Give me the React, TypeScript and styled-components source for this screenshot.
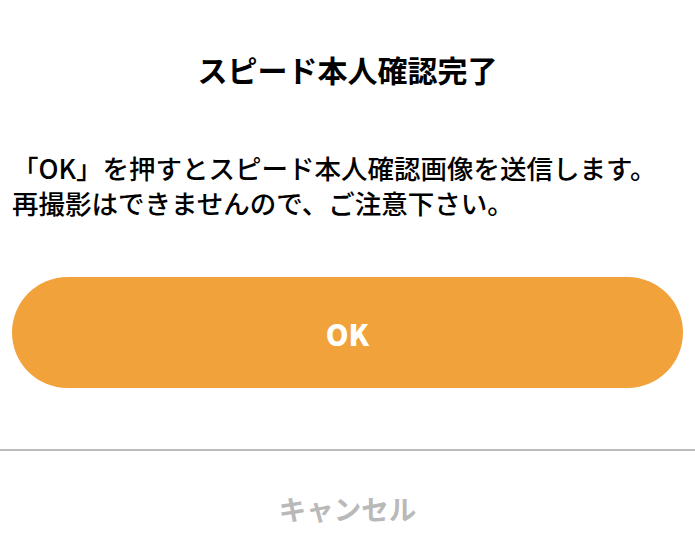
import React from "react";
import styled, { createGlobalStyle } from "styled-components";

const GlobalStyle = createGlobalStyle`
  html, body {
    margin: 0;
    padding: 0;
    background: #ffffff;
  }
  body {
    font-family: "Noto Sans CJK JP", "Noto Sans", sans-serif;
    color: #000000;
  }
`;

const Dialog = styled.div`
  width: 695px;
  height: 556px;
  display: flex;
  flex-direction: column;
  background: #ffffff;
  overflow: hidden;
`;

const Body = styled.div`
  padding: 0 12px;
  display: flex;
  flex-direction: column;
`;

const Title = styled.h1`
  margin: 49px 0 0;
  font-size: 30px;
  line-height: 40px;
  font-weight: 700;
  text-align: center;
`;

const Message = styled.p`
  margin: 61px 0 0;
  font-size: 26.5px;
  line-height: 35px;
  font-weight: 500;
`;

const PrimaryButton = styled.button`
  margin-top: 57px;
  width: 100%;
  height: 111px;
  border: 0;
  border-radius: 56px;
  background: #f2a23a;
  color: #ffffff;
  font-family: "Noto Sans CJK JP", "Noto Sans", sans-serif;
  font-size: 29px;
  font-weight: 900;
  cursor: pointer;
`;

const Divider = styled.hr`
  margin: 61px 0 0;
  border: 0;
  height: 2px;
  background: #bcbcbc;
`;

const CancelButton = styled.button`
  align-self: center;
  margin-top: 36px;
  border: 0;
  background: none;
  color: #b9b9b9;
  font-family: "Noto Sans CJK JP", "Noto Sans", sans-serif;
  font-size: 27.5px;
  line-height: 40px;
  font-weight: 700;
  cursor: pointer;
`;

export default function App() {
  return (
    <>
      <GlobalStyle />
      <Dialog>
        <Body>
          <Title>スピード本人確認完了</Title>
          <Message>
            「OK」を押すとスピード本人確認画像を送信します。
            <br />
            再撮影はできませんので、ご注意下さい。
          </Message>
          <PrimaryButton>OK</PrimaryButton>
        </Body>
        <Divider />
        <CancelButton>キャンセル</CancelButton>
      </Dialog>
    </>
  );
}
